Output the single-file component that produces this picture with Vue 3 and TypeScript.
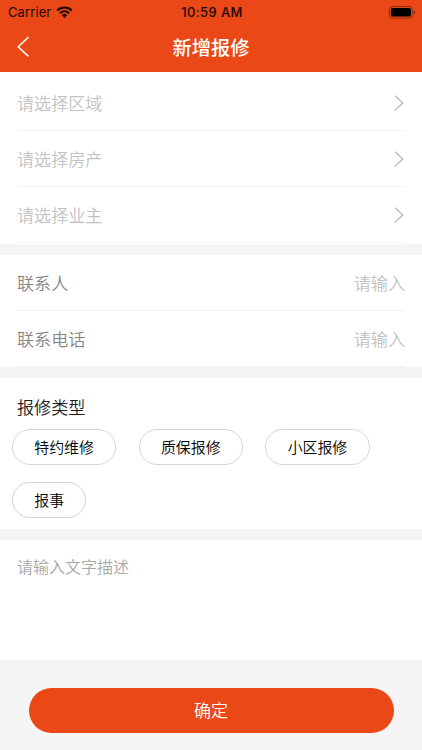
<script setup lang="ts">
import { ref } from 'vue'

interface Field {
  label: string
  placeholder: string
}

const selectors: string[] = ['请选择区域', '请选择房产', '请选择业主']
const fields: Field[] = [
  { label: '联系人', placeholder: '请输入' },
  { label: '联系电话', placeholder: '请输入' },
]
const types: string[] = ['特约维修', '质保报修', '小区报修', '报事']
const selected = ref<string>('')
</script>

<template>
  <div class="page">
    <header class="header">
      <div class="status">
        <div class="carrier">
          <span>Carrier</span>
          <svg class="wifi" width="17" height="12" viewBox="0 0 17 12">
            <path d="M1.2 4.5a10.4 10.4 0 0 1 14.6 0" fill="none" stroke="#210700" stroke-width="2.1" />
            <path d="M3.9 7.2a6.5 6.5 0 0 1 9.2 0" fill="none" stroke="#210700" stroke-width="2" />
            <path d="M8.5 11.9 5.8 9.2a3.8 3.8 0 0 1 5.4 0z" fill="#210700" />
          </svg>
        </div>
        <span class="time">10:59 AM</span>
        <div class="power">
          <svg width="28" height="13" viewBox="0 0 28 13">
            <rect x="1.2" y="0.5" width="23.3" height="11.6" rx="3.4" fill="none" stroke="#8d2b0c" stroke-width="1" />
            <rect x="2.8" y="2" width="20.2" height="8.6" rx="1.8" fill="#000" />
            <path d="M25.7 4.3q1.6.5 1.6 2t-1.6 2z" fill="#8d2b0c" />
          </svg>
        </div>
      </div>
      <div class="nav">
        <svg class="back" width="14" height="22" viewBox="0 0 14 22">
          <path d="M12.4 1.1 2.2 10.8l10.2 9.6" fill="none" stroke="#fff" stroke-width="1.5" />
        </svg>
        <h1>新增报修</h1>
      </div>
    </header>

    <section class="group selectors">
      <div v-for="item in selectors" :key="item" class="row">
        <span class="hint">{{ item }}</span>
        <svg class="arrow" width="10" height="16" viewBox="0 0 10 16">
          <path d="m1 .8 7.8 7.2L1 15.2" fill="none" stroke="#b5b5b5" stroke-width="1.2" />
        </svg>
      </div>
    </section>

    <section class="group contact">
      <div v-for="field in fields" :key="field.label" class="row">
        <span class="label">{{ field.label }}</span>
        <span class="hint">{{ field.placeholder }}</span>
      </div>
    </section>

    <section class="types">
      <h2>报修类型</h2>
      <div class="chips">
        <button
          v-for="type in types"
          :key="type"
          type="button"
          class="chip"
          :class="{ active: selected === type }"
          @click="selected = type"
        >{{ type }}</button>
      </div>
    </section>

    <section class="description">请输入文字描述</section>

    <footer class="footer">
      <button type="button" class="submit">确定</button>
    </footer>
  </div>
</template>

<style>
body {
  margin: 0;
  background: #f5f5f5;
}
</style>

<style scoped>
.page {
  display: flex;
  flex-direction: column;
  height: 750px;
  overflow: hidden;
  background: #f5f5f5;
  font-family: 'Noto Sans CJK SC', sans-serif;
}
.page * {
  box-sizing: border-box;
}
.header {
  flex: none;
  height: 72px;
  background: #ea4816;
}
.status {
  display: grid;
  grid-template-columns: 1fr auto 1fr;
  align-items: center;
  height: 24px;
  padding: 0 6px 0 8px;
  font: 13px/24px Inter, sans-serif;
  color: #210700;
}
.carrier {
  display: flex;
  align-items: center;
  gap: 5px;
  letter-spacing: 0.1px;
}
.time {
  font-size: 13px;
  font-weight: 500;
  letter-spacing: 0.4px;
}
.power {
  display: flex;
  justify-content: flex-end;
}
.nav {
  display: grid;
  grid-template-columns: 1fr auto 1fr;
  align-items: center;
  height: 46px;
  padding: 0 16px;
}
h1 {
  margin: 0;
  font-size: 19.3px;
  font-weight: 500;
  line-height: 46px;
  color: #fff;
}
.group {
  flex: none;
  padding: 0 17px;
  background: #fff;
}
.selectors {
  height: 172px;
  padding-top: 3px;
}
.contact {
  height: 112px;
  margin-top: 11px;
}
.row {
  display: flex;
  align-items: center;
  justify-content: space-between;
  height: 56px;
  border-bottom: 1px solid #f2f2f2;
  font-size: 17.1px;
  font-weight: 350;
}
.hint {
  color: #c2c2c5;
}
.label {
  color: #858585;
}
.arrow {
  margin-right: 1px;
}
.types {
  flex: none;
  height: 151px;
  margin-top: 11px;
  padding: 16px 12px 0;
  background: #fff;
}
h2 {
  margin: 0 0 10px 5px;
  font-size: 17.1px;
  font-weight: 350;
  line-height: 25px;
  color: #1c1c1c;
}
.chips {
  display: flex;
  flex-wrap: wrap;
  gap: 17px 22.5px;
}
.chip {
  height: 36px;
  padding: 0 21.3px 1px;
  border: 1px solid #d5d5d5;
  border-radius: 18px;
  background: #fff;
  font: 350 14.9px/32px 'Noto Sans CJK SC', sans-serif;
  color: #000;
}
.chip.active {
  border-color: #ea4816;
  color: #ea4816;
}
.description {
  flex: none;
  height: 120px;
  margin-top: 11px;
  padding: 14px 17px;
  background: #fff;
  font-size: 16px;
  font-weight: 350;
  line-height: 24px;
  color: #a8a8a8;
}
.footer {
  padding: 28px 28.5px 0;
}
.submit {
  display: block;
  width: 100%;
  height: 45px;
  padding: 0 0 1px;
  border: 0;
  border-radius: 23px;
  background: #ea4816;
  font: 350 17px/44px 'Noto Sans CJK SC', sans-serif;
  color: #fff;
}
</style>
